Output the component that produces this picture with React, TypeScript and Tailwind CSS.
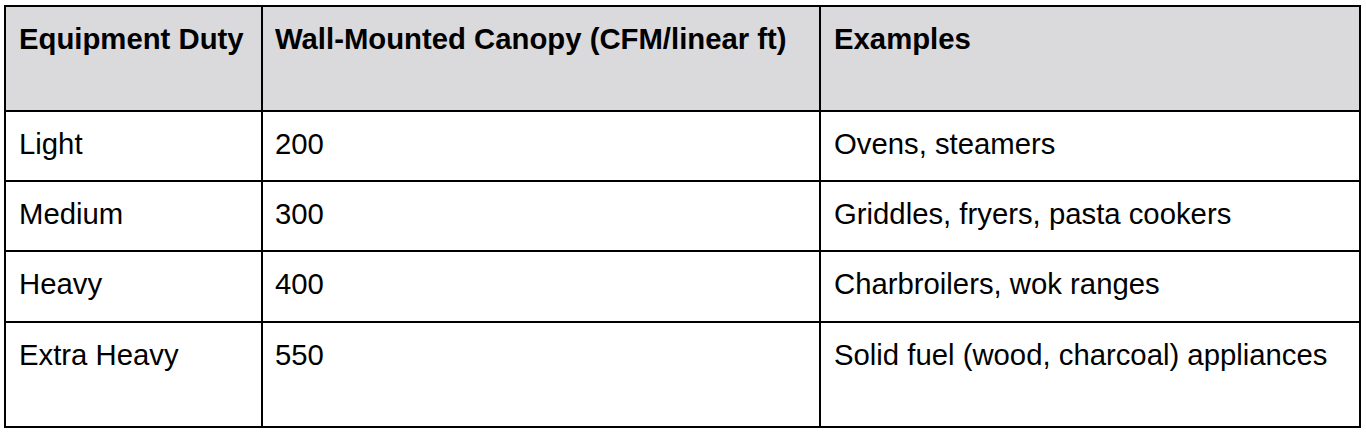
import React from "react";

const rows = [
  ["Light", "200", "Ovens, steamers", "h-[70px]"],
  ["Medium", "300", "Griddles, fryers, pasta cookers", "h-[70px]"],
  ["Heavy", "400", "Charbroilers, wok ranges", "h-[71px]"],
  ["Extra Heavy", "550", "Solid fuel (wood, charcoal) appliances", "h-[105px]"],
];

export default function App() {
  return (
    <div className="w-[1366px] h-[434px] bg-white pt-[5px] pl-[4px] font-['Liberation_Sans',Arial,sans-serif] text-[29.3px] leading-[32px] text-black">
      <div className="w-[1357px] border-2 border-black">
        <div className="flex h-[103px] bg-[#dad9dc] font-bold">
          <div className="w-[255px] pl-[13px] pt-[16px]">Equipment Duty</div>
          <div className="w-[558px] border-l-2 border-black pl-[12px] pt-[16px]">Wall-Mounted Canopy (CFM/linear ft)</div>
          <div className="flex-1 border-l-2 border-black pl-[13px] pt-[16px]">Examples</div>
        </div>
        {rows.map(([a, b, c, h]) => (
          <div key={a} className={`flex border-t-2 border-black ${h}`}>
            <div className="w-[255px] pl-[13px] pt-[16px]">{a}</div>
            <div className="w-[558px] border-l-2 border-black pl-[12px] pt-[16px]">{b}</div>
            <div className="flex-1 border-l-2 border-black pl-[13px] pt-[16px]">{c}</div>
          </div>
        ))}
      </div>
    </div>
  );
}
